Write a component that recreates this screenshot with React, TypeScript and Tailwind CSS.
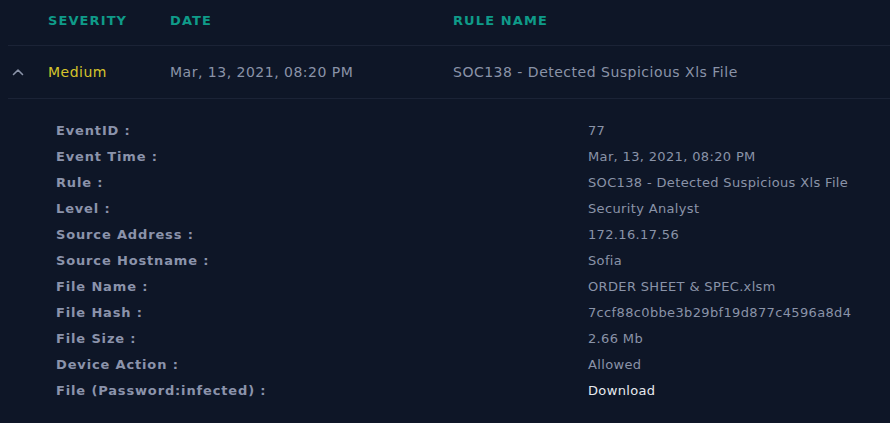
const details: [string, string][] = [
  ['EventID :', '77'],
  ['Event Time :', 'Mar, 13, 2021, 08:20 PM'],
  ['Rule :', 'SOC138 - Detected Suspicious Xls File'],
  ['Level :', 'Security Analyst'],
  ['Source Address :', '172.16.17.56'],
  ['Source Hostname :', 'Sofia'],
  ['File Name :', 'ORDER SHEET & SPEC.xlsm'],
  ['File Hash :', '7ccf88c0bbe3b29bf19d877c4596a8d4'],
  ['File Size :', '2.66 Mb'],
  ['Device Action :', 'Allowed'],
];

function Chevron() {
  return (
    <svg width="12" height="8" viewBox="0 0 12 8" fill="none" className="text-[#8a93a8]">
      <path d="M1.5 6.5 L6 2 L10.5 6.5" stroke="currentColor" strokeWidth="1.6" strokeLinecap="round" strokeLinejoin="round" />
    </svg>
  );
}

export default function App() {
  return (
    <div
      className="min-h-screen w-full bg-[#0e1627] overflow-hidden"
      style={{ fontFamily: '"DejaVu Sans", "Noto Sans", sans-serif' }}
    >
      <div className="pl-2">
        {/* table head */}
        <div className="flex items-center h-[46px] pb-[4px] border-b border-[#1b2336] text-[13px] font-bold tracking-[1.1px] text-[#0f9b89] uppercase">
          <div className="w-10" />
          <div className="w-[122px]">Severity</div>
          <div className="w-[283px]">Date</div>
          <div>Rule Name</div>
        </div>

        {/* expanded row */}
        <div className="flex items-center h-[53px] border-b border-[#1b2336] text-[14px] tracking-[0.5px] text-[#8a93a8]">
          <div className="w-10 pl-1 flex items-center">
            <Chevron />
          </div>
          <div className="w-[122px] text-[#d6c42c]">Medium</div>
          <div className="w-[283px]">Mar, 13, 2021, 08:20 PM</div>
          <div>SOC138 - Detected Suspicious Xls File</div>
        </div>

        {/* details */}
        <div className="pt-[19px] pl-12 flex flex-col">
          {details.map(([k, v]) => (
            <div key={k} className="flex items-center h-[26px] text-[13px]">
              <div className="w-[532px] font-bold tracking-[0.85px] text-[#8b93ab]">{k}</div>
              <div className="tracking-[0.35px] text-[#8a93a8]">{v}</div>
            </div>
          ))}
          <div className="flex items-center h-[26px] text-[13px]">
            <div className="w-[532px] font-bold tracking-[0.85px] text-[#8b93ab]">File (Password:infected) :</div>
            <a className="tracking-[0.35px] text-[#e6e9ef] cursor-pointer">Download</a>
          </div>
        </div>
      </div>
    </div>
  );
}
